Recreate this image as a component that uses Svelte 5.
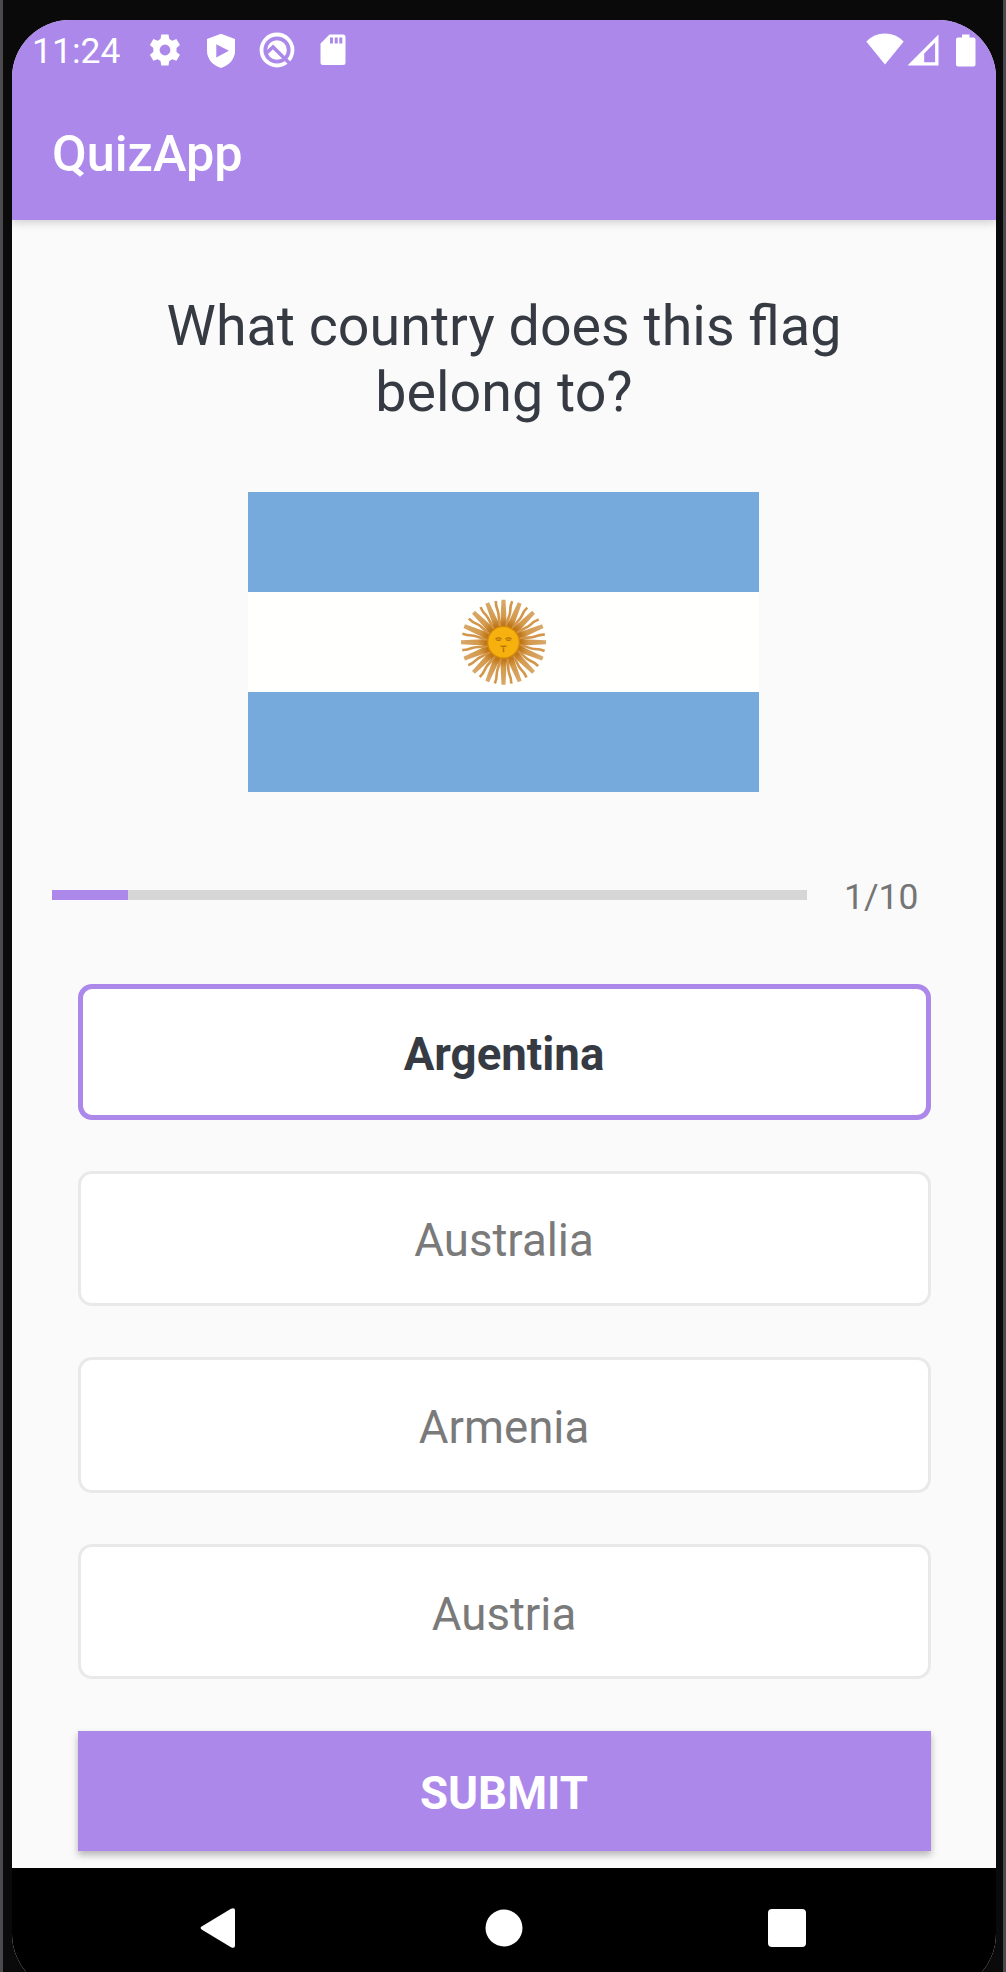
<script>
  const question = 'What country does this flag belong to?';
  const options = ['Argentina', 'Australia', 'Armenia', 'Austria'];
  const total = 10;
  let current = $state(1);
  let selected = $state(0);

  // The sun has 32 rays, alternating straight and wavy.
  const rays = Array.from({ length: 32 }, (_, i) => ({
    angle: (i * 360) / 32,
    straight: i % 2 === 0
  }));
</script>

<div class="device">
  <div class="screen">
    <header>
      <div class="status">
        <span class="clock">11:24</span>
        <svg class="gear" width="32" height="32" viewBox="0 0 32 32">
          <path fill-rule="evenodd" d="M12.3.6h7.2l.8 4.4 2.9 1.7 4.2-1.6 3.5 6-3.4 2.9v3.9l3.4 2.8-3.5 6.1-4.2-1.6-2.9 1.7-.8 4.5h-7.2l-.8-4.5-2.9-1.7-4.2 1.6-3.5-6.1 3.4-2.8v-3.9L.9 11.1l3.5-6 4.2 1.6 2.9-1.7zM16 10.6a5.4 5.4 0 1 0 0 10.8 5.4 5.4 0 0 0 0-10.8z" />
        </svg>
        <svg class="shield" width="30" height="36" viewBox="0 0 30 36">
          <path fill-rule="evenodd" d="M15 .8 29 6v12c0 8-5.5 14-14 17C6.5 32 1 26 1 18V6zM10.3 11.2v13.2l12.6-6.6z" />
        </svg>
        <svg class="round" width="36" height="36" viewBox="0 0 36 36">
          <circle class="line" cx="18" cy="18" r="15.5" />
          <circle cx="18" cy="18" r="9.8" />
          <path class="cut" d="M7 21.5 14 15 31.5 32.300" />
        </svg>
        <svg class="card" width="26" height="32" viewBox="0 0 26 32">
          <path fill-rule="evenodd" d="M9.5.5H23a2.5 2.5 0 0 1 2.5 2.5v25.5A2.5 2.5 0 0 1 23 31H3a2.5 2.5 0 0 1-2.5-2.5V9.5zM10 3.5v6h3v-6zm4.700 0v6h3v-6zm4.600 0v6h3v-6z" />
        </svg>
        <span class="space"></span>
        <svg class="wifi" width="38" height="32" viewBox="0 0 38 32">
          <path d="M19 31.5.3 8.5Q8 .5 19 .5t18.700 8z" />
        </svg>
        <svg class="signal" width="32" height="32" viewBox="0 0 32 32">
          <path fill-rule="evenodd" d="M.5 31.5 31.5.5v31zM17.2 28.3h10.9V8.500L17.200 19.500z" />
        </svg>
        <svg class="battery" width="20" height="33" viewBox="0 0 20 33">
          <path d="M6 .5h7.5V3.500H17.500A2 2 0 0 1 19.500 5.500V30.500a2 2 0 0 1-2 2h-15.500a2 2 0 0 1-2-2V5.500a2 2 0 0 1 2-2H6z" />
        </svg>
      </div>
      <div class="title">QuizApp</div>
    </header>

    <main>
      <h1>{question}</h1>

      <svg class="flag" width="511" height="300" viewBox="0 0 511 300">
        <defs>
          <radialGradient id="ray" gradientUnits="userSpaceOnUse" cx="0" cy="0" r="43">
            <stop offset=".4" stop-color="#bd7414" />
            <stop offset=".6" stop-color="#d49a4c" />
            <stop offset="1" stop-color="#d9a86c" />
          </radialGradient>
        </defs>
        <rect width="511" height="300" fill="#76aadd" />
        <rect y="100" width="511" height="100" fill="#fffffd" />
        <g transform="translate(255.5 150.3)">
          <circle r="21" fill="#cf8a2c" />
          {#each rays as ray}
            {#if ray.straight}
              <path transform="rotate({ray.angle})" fill="url(#ray)" d="M-3.4-15-2-42.500H2L3.400-15z" />
            {:else}
              <path transform="rotate({ray.angle})" fill="none" stroke="#d2954a" stroke-width="2.6" d="M0-15C-1.5-22 1.500-27 .500-32S-.500-38 .500-42" />
            {/if}
          {/each}
          <circle r="16" fill="#f6b10f" stroke="#cf850f" stroke-width="1.5" />
          <path class="face" d="M-8-3q3-3 6 0M2-3q3-3 6 0M-7-2h4M3-2h4M-3 4H3M0 5V10" />
        </g>
      </svg>

      <div class="progress">
        <div class="track"><div class="fill" style:width="{(current / total) * 100}%"></div></div>
        <span>{current}/{total}</span>
      </div>

      <div class="options">
        {#each options as option, i}
          <button class="option" class:selected={selected === i} onclick={() => (selected = i)}>{option}</button>
        {/each}
      </div>

      <button class="submit">SUBMIT</button>
    </main>

    <nav>
      <svg class="back" width="36" height="42" viewBox="0 0 36 42">
        <path d="M2 19.3 31 1.700Q35 0 35 3.500V38.500Q35 42 31 40.300L2 22.700Q-.800 21 2 19.300z" />
      </svg>
      <svg class="home" width="38" height="38" viewBox="0 0 38 38"><circle cx="19" cy="19" r="18.5" /></svg>
      <svg class="recent" width="38" height="38" viewBox="0 0 38 38"><rect width="38" height="38" rx="4" /></svg>
    </nav>
  </div>
</div>

<style>
  :global(body) {
    margin: 0;
    background: #0a0a0a;
  }
  .device {
    box-sizing: border-box;
    width: 1006px;
    height: 1972px;
    padding: 20px 7px 0 9px;
    border: solid #49494e;
    border-width: 0 3px;
    background: #0a0a0a;
    overflow: hidden;
    font-family: Roboto, sans-serif;
  }
  .screen {
    display: flex;
    flex-direction: column;
    width: 984px;
    height: 1972px;
    border-radius: 58px;
    overflow: hidden;
    background: #fafafa;
  }
  header {
    flex: none;
    height: 200px;
    background: #ac88eb;
    box-shadow: 0 2px 9px rgba(0, 0, 0, 0.2);
    color: #fff;
  }
  .status {
    display: flex;
    align-items: flex-start;
    height: 67px;
    padding-left: 20px;
  }
  svg {
    display: block;
    flex: none;
    fill: #fff;
  }
  .clock {
    width: 117px;
    padding-top: 10px;
    font-size: 35.5px;
    line-height: 42px;
  }
  .gear { margin-top: 14px; }
  .shield { margin: 13px 0 0 25px; }
  .round { margin: 12px 0 0 23px; }
  .line { fill: none; stroke: #fff; stroke-width: 3.8; }
  .cut { fill: none; stroke: #ac88eb; stroke-width: 3.5; }
  .card { margin: 14px 0 0 25px; }
  .space { flex: 1; }
  .wifi { margin-top: 13px; }
  .signal { margin: 14px 0 0 3px; }
  .battery { margin: 14px 20px 0 17px; }
  .title {
    padding: 37px 0 0 40px;
    font-size: 50.4px;
    line-height: 60px;
    font-weight: 500;
  }
  main {
    display: flex;
    flex-direction: column;
    align-items: center;
    flex: none;
    height: 1647.5px;
  }
  h1 {
    width: 800px;
    margin: 74px 0 0;
    text-align: center;
    font-size: 55.6px;
    line-height: 65.6px;
    font-weight: 400;
    color: #363a43;
  }
  .flag { margin: 66.8px 1px 0 0; }
  .face { fill: none; stroke: #b9770c; stroke-width: 1.6; }
  .progress {
    display: flex;
    align-items: center;
    align-self: stretch;
    height: 42px;
    margin: 84px 0 0 40px;
    font-size: 35.4px;
    line-height: 42px;
    color: #757575;
  }
  .track {
    flex: none;
    width: 755px;
    height: 10px;
    margin-bottom: 4px;
    background: #d6d6d6;
  }
  .fill {
    height: 10px;
    background: #ac88eb;
  }
  .progress span { padding: 1px 0 0 37px; }
  .options {
    display: grid;
    gap: 51px;
    margin-top: 66px;
  }
  button {
    box-sizing: border-box;
    width: 853px;
    padding: 5px 0 0;
    font: 400 45.6px/53px Roboto, sans-serif;
    text-align: center;
  }
  .option {
    height: 135.6px;
    border: 3px solid #e9e9e9;
    border-radius: 14px;
    background: #fff;
    color: #7a7a7a;
  }
  .selected {
    border: 5px solid #ac88eb;
    font-weight: 700;
    color: #363a43;
  }
  .submit {
    height: 120px;
    margin-top: 51.6px;
    border: 0;
    background: #ac88eb;
    box-shadow: 0 4px 7px rgba(0, 0, 0, 0.28);
    color: #fff;
    font-weight: 700;
  }
  nav {
    display: flex;
    align-items: center;
    justify-content: space-between;
    box-sizing: border-box;
    flex: none;
    height: 124.5px;
    padding: 0 190px 3px 188px;
    background: #000;
  }
  .home { margin-left: 4px; }
</style>
